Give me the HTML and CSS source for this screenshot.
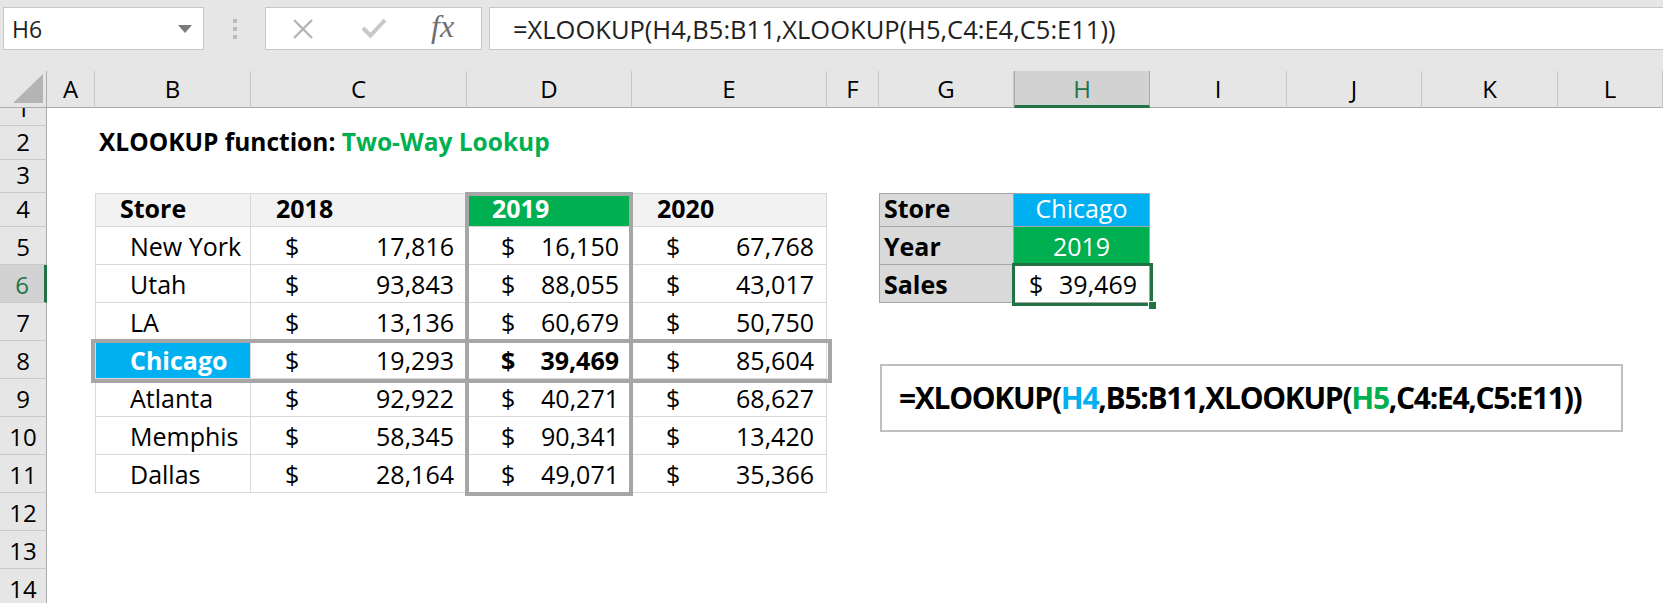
FILE: index.html
```html
<!DOCTYPE html>
<html lang="en">
<head>
    <meta charset="UTF-8">
    <title>XLOOKUP Two-Way Lookup</title>
    <link rel="stylesheet" href="styles.css">
</head>
<body>
    <div class="toolbar">
        <div class="name-box"><span>H6</span><span class="caret"></span></div>
        <div class="grip"><i></i><i></i><i></i></div>
        <div class="fx-box">
            <svg class="ico-cancel" width="22" height="20" viewBox="0 0 22 20"><path d="M2 1 L20 19 M20 1 L2 19" stroke="#b4b4b4" stroke-width="2.4" fill="none"/></svg>
            <svg class="ico-enter" width="26" height="22" viewBox="0 0 26 22"><path d="M2 11 L9.5 18.5 L24 3" stroke="#c8c8c8" stroke-width="4" fill="none"/></svg>
            <span class="fx">fx</span>
        </div>
        <div class="formula-bar">=XLOOKUP(H4,B5:B11,XLOOKUP(H5,C4:E4,C5:E11))</div>
    </div>

    <div class="sheet">
        <!-- column headers -->
        <div class="corner"><div class="corner-tri"></div></div>
        <div class="ch">A</div>
        <div class="ch">B</div>
        <div class="ch">C</div>
        <div class="ch">D</div>
        <div class="ch">E</div>
        <div class="ch">F</div>
        <div class="ch">G</div>
        <div class="ch sel">H</div>
        <div class="ch">I</div>
        <div class="ch">J</div>
        <div class="ch">K</div>
        <div class="ch">L</div>

        <!-- row headers -->
        <div class="rh r1 scrolled">1</div>
        <div class="rh r2">2</div>
        <div class="rh r3">3</div>
        <div class="rh r4">4</div>
        <div class="rh r5">5</div>
        <div class="rh r6 sel">6</div>
        <div class="rh r7">7</div>
        <div class="rh r8">8</div>
        <div class="rh r9">9</div>
        <div class="rh r10">10</div>
        <div class="rh r11">11</div>
        <div class="rh r12">12</div>
        <div class="rh r13">13</div>
        <div class="rh r14">14</div>

        <div class="cell title r2">XLOOKUP function:&nbsp;<span class="green-text">Two-Way Lookup</span></div>

        <!-- data table -->
        <div class="cell tb th first r4 cB store">Store</div>
        <div class="cell tb th r4 cC year">2018</div>
        <div class="cell tb th r4 cD year year-hit">2019</div>
        <div class="cell tb th r4 cE year">2020</div>

        <div class="cell tb first r5 cB store">New York</div>
        <div class="cell tb r5 cC money"><span>$</span><span>17,816</span></div>
        <div class="cell tb r5 cD money"><span>$</span><span>16,150</span></div>
        <div class="cell tb r5 cE money"><span>$</span><span>67,768</span></div>

        <div class="cell tb first r6 cB store">Utah</div>
        <div class="cell tb r6 cC money"><span>$</span><span>93,843</span></div>
        <div class="cell tb r6 cD money"><span>$</span><span>88,055</span></div>
        <div class="cell tb r6 cE money"><span>$</span><span>43,017</span></div>

        <div class="cell tb first r7 cB store">LA</div>
        <div class="cell tb r7 cC money"><span>$</span><span>13,136</span></div>
        <div class="cell tb r7 cD money"><span>$</span><span>60,679</span></div>
        <div class="cell tb r7 cE money"><span>$</span><span>50,750</span></div>

        <div class="cell tb first r8 cB store store-hit">Chicago</div>
        <div class="cell tb r8 cC money"><span>$</span><span>19,293</span></div>
        <div class="cell tb r8 cD money bold"><span>$</span><span>39,469</span></div>
        <div class="cell tb r8 cE money"><span>$</span><span>85,604</span></div>

        <div class="cell tb first r9 cB store">Atlanta</div>
        <div class="cell tb r9 cC money"><span>$</span><span>92,922</span></div>
        <div class="cell tb r9 cD money"><span>$</span><span>40,271</span></div>
        <div class="cell tb r9 cE money"><span>$</span><span>68,627</span></div>

        <div class="cell tb first r10 cB store">Memphis</div>
        <div class="cell tb r10 cC money"><span>$</span><span>58,345</span></div>
        <div class="cell tb r10 cD money"><span>$</span><span>90,341</span></div>
        <div class="cell tb r10 cE money"><span>$</span><span>13,420</span></div>

        <div class="cell tb first r11 cB store">Dallas</div>
        <div class="cell tb r11 cC money"><span>$</span><span>28,164</span></div>
        <div class="cell tb r11 cD money"><span>$</span><span>49,071</span></div>
        <div class="cell tb r11 cE money"><span>$</span><span>35,366</span></div>

        <div class="hl-col"></div>
        <div class="hl-row"></div>

        <!-- lookup inputs -->
        <div class="cell lk lk-top r4 cG">Store</div>
        <div class="cell lk-val lk-top r4 cH input-store">Chicago</div>
        <div class="cell lk r5 cG">Year</div>
        <div class="cell lk-val r5 cH input-year">2019</div>
        <div class="cell lk r6 cG">Sales</div>
        <div class="cell lk-val r6 cH money result"><span>$</span><span>39,469</span></div>
        <div class="selection"></div>

        <div class="callout">=XLOOKUP(<span class="blue-text">H4</span>,B5:B11,XLOOKUP(<span class="green-text">H5</span>,C4:E4,C5:E11))</div>
    </div>
</body>
</html>
```

FILE: styles.css
```css
body {
    margin: 0;
    background-color: white;
    font-family: "Open Sans", "Liberation Sans", sans-serif;
    color: black;
    overflow: hidden;
}

/* formula toolbar */
.toolbar {
    display: flex;
    align-items: flex-start;
    height: 71px;
    box-sizing: border-box;
    padding: 7px 0 0 3px;
    background-color: #e6e6e6;
}
.name-box,
.fx-box,
.formula-bar {
    height: 43px;
    box-sizing: border-box;
    border: 1px solid #c6c6c6;
    background-color: white;
    display: flex;
    align-items: center;
}
.name-box {
    width: 201px;
    justify-content: space-between;
    padding: 0 11px 0 8px;
    font-size: 23px;
    color: #222;
}
.caret {
    width: 0;
    height: 0;
    border-left: 7px solid transparent;
    border-right: 7px solid transparent;
    border-top: 8px solid #7b7b7b;
}
.grip {
    display: flex;
    flex-direction: column;
    gap: 4px;
    margin: 12px 0 0 29px;
}
.grip i {
    width: 4px;
    height: 4px;
    background-color: #bcbcbc;
}
.fx-box {
    width: 217px;
    margin-left: 28px;
    padding-left: 26px;
}
.ico-enter { margin-left: 47px; margin-top: -2px; }
.fx {
    margin-left: 44px;
    font-family: "Liberation Serif", serif;
    font-style: italic;
    font-size: 32px;
    color: #6f6f6f;
    margin-top: -4px;
}
.formula-bar {
    flex: 1;
    margin-left: 7px;
    border-right: none;
    padding-left: 23px;
    font-size: 25.5px;
    color: #222;
    white-space: nowrap;
}

/* worksheet grid */
.sheet {
    display: grid;
    grid-template-columns: 47px 48px 156px 216px 165px 195px 52px 135px 136px 137px 135px 136px 1fr;
    grid-template-rows: 37px 18px 34px 33px 34px repeat(10, 38px);
    font-size: 25px;
}
.r1 { grid-row: 2; }
.r2 { grid-row: 3; }
.r3 { grid-row: 4; }
.r4 { grid-row: 5; }
.r5 { grid-row: 6; }
.r6 { grid-row: 7; }
.r7 { grid-row: 8; }
.r8 { grid-row: 9; }
.r9 { grid-row: 10; }
.r10 { grid-row: 11; }
.r11 { grid-row: 12; }
.r12 { grid-row: 13; }
.r13 { grid-row: 14; }
.r14 { grid-row: 15; }
.cB { grid-column: 3; }
.cC { grid-column: 4; }
.cD { grid-column: 5; }
.cE { grid-column: 6; }
.cG { grid-column: 8; }
.cH { grid-column: 9; }

.corner,
.ch,
.rh {
    background-color: #e6e6e6;
    box-sizing: border-box;
    display: flex;
    align-items: flex-end;
    justify-content: center;
    line-height: 30px;
    font-size: 24px;
}
.corner {
    grid-row: 1;
    grid-column: 1;
    border-right: 1px solid #ababab;
    border-bottom: 1px solid #ababab;
    padding: 0 3px 4px 0;
    justify-content: flex-end;
}
.corner-tri {
    width: 30px;
    height: 29px;
    background-color: #b4b4b4;
    clip-path: polygon(100% 0, 100% 100%, 0 100%);
}
.ch {
    grid-row: 1;
    border-right: 1px solid #c8c8c8;
    border-bottom: 1px solid #ababab;
    padding-bottom: 3px;
}
.ch.sel {
    background-color: #d2d2d2;
    color: #217346;
    border-left: 1px solid #ababab;
    border-right: 1px solid #ababab;
    border-bottom: 3px solid #217346;
    padding-bottom: 1px;
}
.rh {
    grid-column: 1;
    border-right: 1px solid #ababab;
    border-bottom: 1px solid #c8c8c8;
    padding-bottom: 2px;
}
.rh.scrolled { overflow: hidden; }
.rh.sel {
    background-color: #d2d2d2;
    color: #217346;
    border-right: 3px solid #217346;
}

.cell {
    display: flex;
    align-items: flex-end;
    box-sizing: border-box;
    line-height: 34px;
    padding-bottom: 1px;
    white-space: nowrap;
}
.title {
    grid-column: 3 / 8;
    padding-left: 4px;
    font-size: 24.5px;
    font-weight: bold;
}
.green-text { color: #00b050; }
.blue-text { color: #00b0f0; }

/* store table */
.tb {
    border-right: 1px solid #d9d9d9;
    border-bottom: 1px solid #d9d9d9;
}
.tb.r4 { border-top: 1px solid #d9d9d9; }
.tb.first { border-left: 1px solid #d9d9d9; }
.th {
    background-color: #f2f2f2;
    font-weight: bold;
}
.store { padding-left: 24px; }
.store:not(.th) { padding-left: 34px; }
.store-hit {
    background-color: #00b0f0;
    color: white;
    font-weight: bold;
}
.year { padding-left: 25px; }
.year-hit {
    background-color: #00b050;
    color: white;
}
.money {
    justify-content: space-between;
    padding-left: 34px;
    padding-right: 12px;
}
.bold { font-weight: bold; }

.hl-col {
    grid-column: 5;
    grid-row: 5 / 13;
    margin: -1px -1px -3px -2px;
    border: 4px solid #a6a6a6;
}
.hl-row {
    grid-column: 3 / 7;
    grid-row: 9;
    margin: -2px -5px -4px -4px;
    border: 4px solid #a6a6a6;
}

/* lookup inputs */
.lk {
    background-color: #d9d9d9;
    border: 1px solid #a6a6a6;
    border-top: none;
    padding-left: 4px;
    font-weight: bold;
}
.lk-val {
    border-right: 1px solid #a6a6a6;
    border-bottom: 1px solid #a6a6a6;
    justify-content: center;
}
.lk-top { border-top: 1px solid #a6a6a6; }
.input-store {
    background-color: #00b0f0;
    color: white;
}
.input-year {
    background-color: #00b050;
    color: white;
}
.result {
    justify-content: space-between;
    padding-left: 15px;
    padding-right: 12px;
}
.selection {
    grid-column: 9;
    grid-row: 7;
    margin: -2px -3px -3px -2px;
    border: 3px solid #217346;
    position: relative;
}
.selection::after {
    content: "";
    position: absolute;
    right: -6px;
    bottom: -6px;
    width: 7px;
    height: 7px;
    background-color: #217346;
    border-left: 1px solid white;
    border-top: 1px solid white;
}

/* formula text box */
.callout {
    grid-column: 8 / 14;
    grid-row: 9 / 12;
    align-self: start;
    justify-self: start;
    width: 743px;
    height: 68px;
    margin: 23px 0 0 1px;
    box-sizing: border-box;
    border: 2px solid #bfbfbf;
    background-color: white;
    display: flex;
    align-items: center;
    padding: 0 0 2px 17px;
    font-size: 30px;
    font-weight: bold;
    letter-spacing: -1.3px;
    white-space: nowrap;
}
```
